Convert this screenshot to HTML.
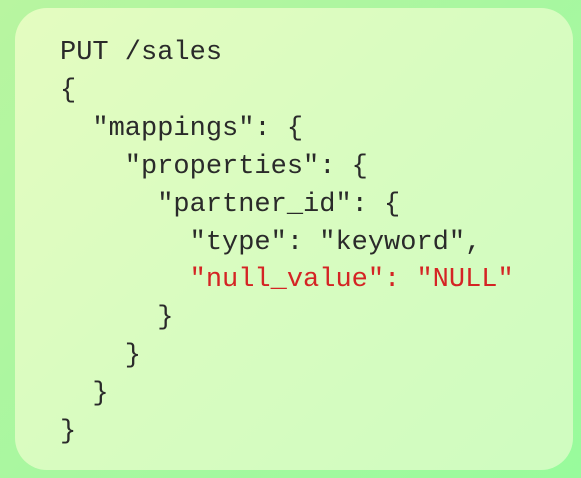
<!DOCTYPE html>
<html><head><style>
html,body{margin:0;padding:0;}
body{width:581px;height:478px;overflow:hidden;background:linear-gradient(135deg,#b8f5a0 0%,#a8f7a0 50%,#98fb9c 100%);position:relative;}
.card{position:absolute;left:15px;top:8px;width:558px;height:462px;border-radius:32px;background:linear-gradient(135deg,#e4fcc0 0%,#d8fcc0 50%,#cffcc0 100%);}
pre{position:absolute;left:60px;top:35px;margin:0;font-family:"Liberation Mono",monospace;font-size:27px;line-height:37.9px;color:#2a2a2a;letter-spacing:0px;}
.r{color:#d42424;}
</style></head><body>
<div class="card"></div>
<pre>PUT /sales
{
  "mappings": {
    "properties": {
      "partner_id": {
        "type": "keyword",
        <span class="r">"null_value": "NULL"</span>
      }
    }
  }
}</pre>
</body></html>
